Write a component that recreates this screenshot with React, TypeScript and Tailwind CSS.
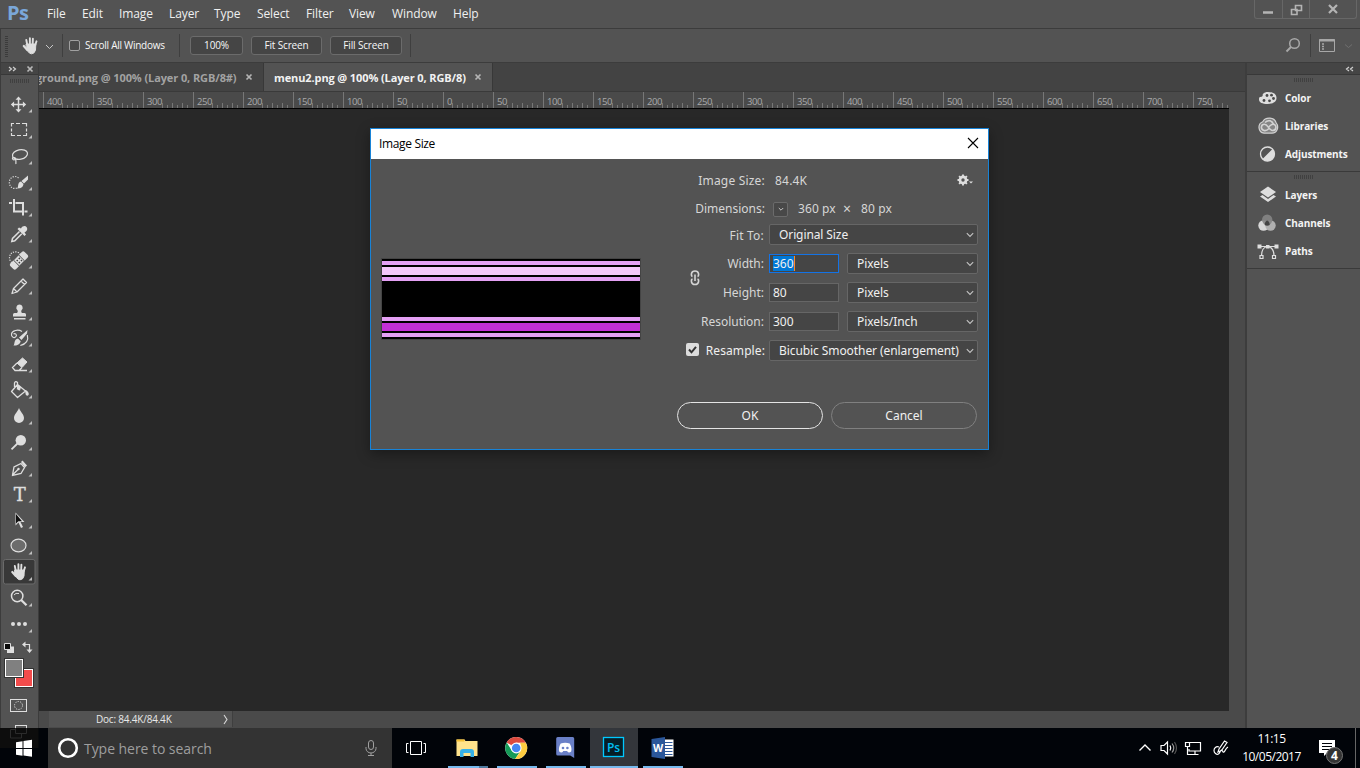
import type { ReactNode } from "react";

const UI = "font-['Open_Sans','Noto_Sans',sans-serif]";

function HandShape() {
  return (
    <g stroke="#dedede" strokeLinecap="round" fill="none">
      <path d="M15.700 11.500 L14.800 7 M18.400 10.500 V5.200 M21.200 10.500 L21.400 5.600 M23.800 12 L25 8.300" strokeWidth="1.900" />
      <path d="M15.800 17 L12.300 13" strokeWidth="2.200" />
      <path d="M15 11 H24.300 L24 17 Q23 20.800 20 20.800 Q18 20.800 16.500 18.500 L14.800 16 Z" fill="#dedede" strokeWidth="1" />
    </g>
  );
}

const L = "#dedede";

const tools: { name: string; art: ReactNode }[] = [
  {
    name: "move",
    art: (
      <>
        <path d="M18.500 7V20M12 13.500H25" stroke={L} strokeWidth="1.500" fill="none" />
        <path d="M18.500 5.500l3 3.300h-6zM18.500 21.500l3-3.300h-6zM10.800 13.500l3.300-3v6zM26.200 13.500l-3.300-3v6z" fill={L} />
      </>
    ),
  },
  { name: "marquee", art: <path d="M11.500 9.500V6.500H14M16 6.500h4M22 6.500h4.500V9.500M26.500 11.500v3M26.500 16v2.500H23M21 18.500h-4M15 18.500h-3.500V16M11.500 14.500V11.500" fill="none" stroke={L} strokeWidth="1.200" /> },
  {
    name: "lasso",
    art: (
      <g fill="none" stroke={L} strokeWidth="1.200">
        <ellipse cx="20" cy="11.500" rx="7.600" ry="4.800" transform="rotate(-12 20 11.500)" />
        <path d="M13 14c-1.500 2 .5 3.500 2 2.500s-.5-2.500-1.500-1.500M15.500 16.500c1 1.500 0 2.500.5 4.500" />
      </g>
    ),
  },
  {
    name: "quick-select",
    art: (
      <>
        <path d="M18.500 9A5.500 6 0 1 0 17 19" fill="none" stroke={L} strokeWidth="1.200" strokeDasharray="1.200 1.300" />
        <path d="M28 6.500v4l-4 4-2.500-2.500zM21 12.500l2.500 2.500c-.5 4-4 4.500-6.500 4.500 2-1.500 0-6 4-7z" fill={L} />
      </>
    ),
  },
  { name: "crop", art: <path d="M14 4v12.500h8.500M9 8h3M15.500 8h7.500v12.500M24.500 16.500h3" fill="none" stroke={L} strokeWidth="2" /> },
  {
    name: "eyedropper",
    art: (
      <>
        <path d="M19.500 10.500l-7 7-.7 3 3-.7 7-7" fill="none" stroke={L} strokeWidth="1.500" />
        <path d="M17.500 8l7 7 1.500-1.500-1.500-2c3.500-2 3-4 2-5.500s-4-1.500-5.500 1.500l-2-1z" fill={L} />
      </>
    ),
  },
  {
    name: "healing",
    art: (
      <>
        <path d="M20.500 7.500a6 6 0 1 0-8 8.500" fill="none" stroke={L} strokeWidth="1.200" strokeDasharray="1.200 1.200" />
        <g transform="rotate(-45 19 13.500)">
          <rect x="9" y="9.500" width="20" height="8" rx="2" fill={L} />
          <rect x="15" y="9.500" width="8" height="8" fill="#535353" />
          <rect x="15.800" y="9.800" width="6.400" height="7.400" fill={L} />
          <path d="M17 11.500h1.500v1.500H17zM20 11.500h1.500v1.500H20zM17 14.500h1.500V16H17zM20 14.500h1.500V16H20z" fill="#444" />
        </g>
      </>
    ),
  },
  { name: "pencil", art: <path d="M12 20.500l1.500-5 9.500-9.500 3.500 3.500-9.500 9.500zM13.500 15.500l3.500 3.500M21 8l3.500 3.500" fill="none" stroke={L} strokeWidth="1.300" strokeLinejoin="round" /> },
  { name: "stamp", art: <path d="M19.500 5.500a3.200 3.200 0 0 0-2 5.700c.6 1.300 0 2.300-.5 2.800h-2.500q-1.500 0-1.500 1.500v2h13v-2q0-1.500-1.500-1.500H22c-.5-.5-1.100-1.500-.5-2.800a3.200 3.200 0 0 0-2-5.700zM14 19h11.500v1.500H14z" fill={L} /> },
  {
    name: "history",
    art: (
      <>
        <path d="M22 6.500c-4-2.500-10-1-10.500 2.500s3 4.500 4.500 2.500-1-3.500-2.500-2.500M27.300 10c1.500 5-1 9-7 10.500" fill="none" stroke={L} strokeWidth="1.200" />
        <path d="M27.500 5l-.5 3.500-5.500 6.500-2.500-2.500zM18 13.500l2.700 2.700c-1 3.800-4 4.300-7.200 4.300 1.700-2 0-6 4.500-7z" fill={L} />
      </>
    ),
  },
  {
    name: "eraser",
    art: (
      <>
        <path d="M22.500 7l4.500 4-5 5.500-5-4.500z" fill={L} stroke={L} />
        <path d="M17 12l-4.500 4.500 2.500 3h4l3-3M15 19.500h12" fill="none" stroke={L} strokeWidth="1.300" />
      </>
    ),
  },
  {
    name: "bucket",
    art: (
      <>
        <path d="M17.500 7.500l8 6.500-8 6.500-6-6zM14.500 10V6q1-2.500 3-.5v7" fill="none" stroke={L} strokeWidth="1.300" strokeLinejoin="round" />
        <path d="M17 7l4 3-1 3.500-2-.5zM25 13c3 .5 4.500 3.500 3.500 5s-3 .5-3-1.500z" fill={L} />
      </>
    ),
  },
  { name: "blur", art: <path d="M19 5c1.500 4 5 6.500 5 10a5 5 0 0 1-10 0c0-3.500 3.500-6 5-10z" fill={L} /> },
  {
    name: "dodge",
    art: (
      <>
        <circle cx="20.800" cy="11.300" r="5.200" fill={L} />
        <path d="M17.500 14.500l-6 5.800" stroke={L} strokeWidth="1.800" />
      </>
    ),
  },
  {
    name: "pen",
    art: (
      <>
        <path d="M12.500 20l1.500-8 7-3.500 3.500 4-3.500 6-8.500 2zM12.500 20l6-6" fill="none" stroke={L} strokeWidth="1.300" />
        <circle cx="18.500" cy="14" r="1.200" fill={L} />
        <path d="M21 7l1.500-1.500 4.500 5-2 2z" fill={L} />
      </>
    ),
  },
  { name: "type", art: <text x="19.800" y="19.500" textAnchor="middle" fill={L} stroke={L} strokeWidth=".4" fontSize="18" fontFamily="DejaVu Serif, serif">T</text> },
  {
    name: "select",
    art: (
      <>
        <path d="M15.500 5.500v13l3-3 2.500 5.500 2-1-2.500-5h4z" fill={L} />
        <path d="M16 7v9.500l2.300-2.200h3.700z" fill="#111" />
      </>
    ),
  },
  { name: "ellipse", art: <ellipse cx="18.500" cy="12.500" rx="7.500" ry="6.300" fill="#6c6c6c" stroke={L} strokeWidth="1.200" /> },
  { name: "hand", art: <HandShape /> },
  {
    name: "zoom",
    art: (
      <>
        <circle cx="17.200" cy="11" r="5.700" fill="none" stroke={L} strokeWidth="1.500" />
        <path d="M14 10q1.500-2.500 5-1.500" fill="none" stroke={L} />
        <path d="M21.200 15l5.300 5.300" stroke={L} strokeWidth="2.300" />
      </>
    ),
  },
  {
    name: "more",
    art: (
      <g fill={L}>
        <circle cx="13" cy="13" r="2" />
        <circle cx="19" cy="13" r="2" />
        <circle cx="25" cy="13" r="2" />
      </g>
    ),
  },
];

const menus = [
  ["File", "w-[35px]"],
  ["Edit", "w-[37px]"],
  ["Image", "w-[50px]"],
  ["Layer", "w-[45px]"],
  ["Type", "w-[43px]"],
  ["Select", "w-[49px]"],
  ["Filter", "w-[43px]"],
  ["View", "w-[43px]"],
  ["Window", "w-[61px]"],
  ["Help", "w-[40px]"],
];

function MenuBar() {
  return (
    <header className="flex h-[28px] shrink-0 items-start">
      <div className="w-[47px] pl-[7px] font-['Open_Sans'] text-[20px] leading-[26px] font-bold tracking-[-0.5px] text-[#7aa7d9]">Ps</div>
      <nav className="flex flex-1 text-[12px] leading-[28px] tracking-[-0.1px] text-[#f0f0f0]">
        {menus.map(([m, w]) => (
          <span key={m} className={`${w} shrink-0 whitespace-nowrap`}>{m}</span>
        ))}
      </nav>
      <div className="mr-[3px] flex h-[19px] w-[103px] rounded-b-[3px] border border-t-0 border-[#676767]">
        <svg width="101" height="18" viewBox="0 0 101 18" fill="none">
          <path d="M27.500 0V18M54.500 0V18" stroke="#676767" />
          <path d="M8 12.500h10" stroke="#b4b4b4" strokeWidth="2.500" />
          <path d="M40.500 5.500h6v5h-6zM36.500 9.500h5.500v5h-5.500z" stroke="#b4b4b4" strokeWidth="1.600" />
          <path d="M74 5l8 8M82 5l-8 8" stroke="#b4b4b4" strokeWidth="2.200" />
        </svg>
      </div>
    </header>
  );
}

function FlatButton({ children, className }: { children: ReactNode; className: string }) {
  return (
    <button className={`h-[19px] rounded-[3px] border border-[#6b6b6b] bg-[#454545] text-center text-[10px] leading-[17px] tracking-[-0.15px] whitespace-nowrap text-[#f8f8f8] ${className}`}>{children}</button>
  );
}

function OptionsBar() {
  return (
    <div className="flex h-[35px] shrink-0 items-center border-t border-b border-[#3c3c3c] border-l border-l-[#3c3c3c]">
      <svg width="61" height="33" viewBox="1 0 61 33" fill="none">
        <path d="M6.500 7V28" stroke="#3b3b3b" strokeWidth="3" strokeDasharray="1 1" />
        <g transform="translate(11.500 4)"><HandShape /></g>
        <path d="M46 16l3.500 3.500L53 16" stroke="#c8c8c8" />
      </svg>
      <div className="h-[23px] w-px bg-[#3f3f3f]" />
      <div className="ml-[6px] h-[11px] w-[11px] rounded-[2px] border border-[#a0a0a0] bg-[#4a4a4a]" />
      <div className="ml-[5px] w-[94px] text-[10px] tracking-[-0.27px] whitespace-nowrap text-[#f8f8f8]">Scroll All Windows</div>
      <div className="h-[23px] w-px bg-[#3f3f3f]" />
      <FlatButton className="ml-[10px] w-[53px]">100%</FlatButton>
      <FlatButton className="ml-[8px] w-[71px]">Fit Screen</FlatButton>
      <FlatButton className="ml-[8px] w-[72px]">Fill Screen</FlatButton>
      <div className="ml-[8px] h-[23px] w-px bg-[#3f3f3f]" />
      <svg className="ml-auto" width="78" height="33" viewBox="1282 29 78 33" fill="none">
        <circle cx="1294.500" cy="43.500" r="4.800" stroke="#a8a8a8" strokeWidth="1.500" />
        <path d="M1291 47l-4.500 4.500" stroke="#a8a8a8" strokeWidth="2" />
        <path d="M1310.500 34v23" stroke="#3f3f3f" />
        <path d="M1319.500 39.500h15v12h-15z" stroke="#a8a8a8" />
        <path d="M1319 40.500h16" stroke="#a8a8a8" strokeWidth="2" />
        <path d="M1322 44h2M1322 46.500h2M1322 49h2" stroke="#a8a8a8" strokeWidth="1.300" />
        <path d="M1345 44.500l3.500 3 3.500-3" stroke="#707070" />
      </svg>
    </div>
  );
}

function Grip() {
  return (
    <svg width="19" height="4" viewBox="0 0 19 4" className="block">
      <path d="M0 2H19" stroke="#404040" strokeWidth="4" strokeDasharray="1 1" />
    </svg>
  );
}

function Toolbar() {
  return (
    <aside className="relative z-10 flex w-[39px] shrink-0 flex-col border-r border-l border-[#3c3c3c] bg-[#535353]">
      <div className="h-[12px] shrink-0 border-b border-[#383838] bg-[#454545]">
        <svg width="37" height="11" viewBox="1 0 37 11" fill="none">
          <path d="M9 4l2.500 2L9 8M13 4l2.500 2L13 8" stroke="#d0d0d0" strokeWidth="1.200" />
          <path d="M27.500 3.500l5 5M32.500 3.500l-5 5" stroke="#b8b8b8" strokeWidth="1.700" />
        </svg>
      </div>
      <div className="flex h-[16px] shrink-0 justify-center pt-[4px]"><Grip /></div>
      {tools.map((t) => (
        <svg key={t.name} width="37" height="26" viewBox="1 0 37 26" className="block shrink-0">
          {t.name === "hand" && <rect x="3.500" y=".5" width="31.500" height="24.500" rx="2" fill="#383838" stroke="#6a6a6a" />}
          {t.art}
          <path d="M32 18v3.500h-3.500z" fill="#c0c0c0" />
        </svg>
      ))}
      <svg width="37" height="91" viewBox="1 637 37 91" fill="none" className="block shrink-0">
        <path d="M7 646.500h7v6.500H7z" fill={L} />
        <path d="M4.500 643.500h6v6h-6z" fill="#0a0a0a" stroke={L} />
        <path d="M24 644.500h5.500v6" stroke={L} strokeWidth="1.200" />
        <path d="M22 644.500l3.500-3v6zM29.500 653l-3-3.500h6z" fill={L} />
        <rect x="14.500" y="668.500" width="19" height="19" fill="#f24c4c" stroke="#333" />
        <rect x="15.500" y="669.500" width="17" height="17" fill="#f24c4c" stroke="#fff" />
        <rect x="4.500" y="658.500" width="19" height="19" stroke="#333" />
        <rect x="5.500" y="659.500" width="17" height="17" fill="#808080" stroke="#fff" />
        <rect x="10.500" y="699.500" width="16" height="12" stroke={L} />
        <circle cx="18.500" cy="705.500" r="4" stroke={L} strokeDasharray="1.200 1.300" />
        <rect x="15.500" y="725.500" width="11" height="8" stroke={L} />
      </svg>
    </aside>
  );
}

const rulerLabels = [400, 350, 300, 250, 200, 150, 100, 50, 0, 50, 100, 150, 200, 250, 300, 350, 400, 450, 500, 550, 600, 650, 700, 750];

function Ruler() {
  return (
    <div className="flex h-[17px] w-[1190px] overflow-hidden border-b border-black bg-[#4a4a4a] pl-[4px]">
      {rulerLabels.map((n, i) => {
        const first = n >= 100 ? 20 : n > 0 ? 15 : 10;
        return (
          <div key={i} className="flex h-[16px] w-[50px] shrink-0 border-l border-[#777] pt-[4px]">
            <span className="w-[20px] pl-[3px] text-[9.5px] leading-[11px] tracking-[-0.4px] text-[#a9a9a9]">{n}</span>
            <svg width="50" height="12" viewBox="1 0 50 12" className="-ml-[20px] shrink-0">
              {[10, 15, 20, 25, 30, 35, 40, 45].filter((x) => x >= first).map((x) => (
                <path key={x} d={`M${x + 0.5} ${x % 10 ? 9 : 7}V12`} stroke="#777" />
              ))}
            </svg>
          </div>
        );
      })}
    </div>
  );
}

function DocTabs() {
  return (
    <div className="flex h-[29px] shrink-0 border-b border-[#3a3a3a] bg-[#434343] text-[11px] leading-[29px] font-bold whitespace-nowrap">
      <div className="flex w-[225px] items-center border-r border-[#383838] text-[#a2a2a2]">
        <span className="-ml-[3px] w-[209px] tracking-[-0.1px]">ground.png @ 100% (Layer 0, RGB/8#)</span>
        <TabClose />
      </div>
      <div className="flex w-[229px] items-center border-r border-[#383838] bg-[#535353] pl-[10px] text-[#f2f2f2]">
        <span className="w-[200px] tracking-[-0.11px]">menu2.png @ 100% (Layer 0, RGB/8)</span>
        <TabClose />
      </div>
    </div>
  );
}

function TabClose() {
  return (
    <svg width="8" height="8" viewBox="0 0 8 8"><path d="M1.500 1.500l5 5M6.500 1.500l-5 5" stroke="#b4b4b4" strokeWidth="1.700" /></svg>
  );
}

function Document() {
  return (
    <main className="flex min-w-0 flex-1 flex-col">
      <DocTabs />
      <div className="flex flex-1">
        <div className="flex w-[1190px] flex-col bg-[#282828]"><Ruler /></div>
        <div className="flex-1 bg-[#4a4a4a]" />
      </div>
      <div className="flex h-[17px] shrink-0 bg-[#4a4a4a] pl-[10px] pb-px">
        <div className="flex w-[184px] items-center border-r border-[#3f3f3f] bg-[#535353] pl-[47px] text-[10px] text-[#e8e8e8]">
          <span className="w-[126px] tracking-[-0.2px] whitespace-nowrap">Doc: 84.4K/84.4K</span>
          <svg width="8" height="11" viewBox="0 0 8 11"><path d="M2 1l3 4.500L2 10" fill="none" stroke="#d8d8d8" strokeWidth="1.100" /></svg>
        </div>
      </div>
    </main>
  );
}

const panelGroups: { label: string; icon: ReactNode }[][] = [
  [
    {
      label: "Color",
      icon: (
        <>
          <path d="M10 4c5 0 8.500 2 8.500 6s-4 6-9 6C4.500 16 1 14.500 1 11.500S2.500 9 4 8.500 4 7.500 5 6 8 4 10 4z" fill={L} />
          <g fill="#484848"><circle cx="9" cy="7.500" r="1.400" /><circle cx="13.500" cy="7.200" r="1.400" /><circle cx="15.500" cy="10.500" r="1.400" /><circle cx="11.500" cy="12.800" r="1.400" /><circle cx="6" cy="12.500" r="1.400" /></g>
        </>
      ),
    },
    {
      label: "Libraries",
      icon: (
        <g fill="none" stroke="#d2d2d2">
          <path d="M6 17.200a6 6 0 0 1-1.200-11.500C7 1 16 .5 18 6.500c3.500 4.500 1 10.700-4 10.700z" fill="#858585" strokeWidth="1.200" />
          <path d="M11 12.500C9 14.500 7.500 15 6 14.500 2 13 3 8.300 6.500 8.300c3.500 0 4.500 6.200 8 6.200 4.500 0 4.500-6.200.5-6.200-2 0-3 1.500-4 2.500M7 6.500c3-3 7-2 8.500 1.500" strokeWidth="1.600" />
        </g>
      ),
    },
    {
      label: "Adjustments",
      icon: (
        <>
          <circle cx="9.500" cy="10" r="7" fill="none" stroke={L} strokeWidth="1.300" />
          <path d="M14.500 5A7 7 0 0 1 4.500 15z" fill={L} />
        </>
      ),
    },
  ],
  [
    {
      label: "Layers",
      icon: (
        <>
          <path d="M10 1.500l8 5.500-8 5.500L2 7z" fill={L} />
          <path d="M2 11.500l2.500-1.500 5.500 4 5.500-4 2.500 1.500-8 5.500z" fill={L} />
        </>
      ),
    },
    {
      label: "Channels",
      icon: (
        <>
          <circle cx="5.500" cy="12.500" r="5.200" fill="#d8d8d8" />
          <circle cx="12.500" cy="12.500" r="5.200" fill="#b0b0b0" />
          <circle cx="9.200" cy="6.700" r="5.200" fill="#858585" fillOpacity=".9" />
          <path d="M9.200 7.500c2 1 2.500 2.500 2.500 4.500-1.500 1-3.500 1-5 0 0-2 .5-3.500 2.500-4.500z" fill="#444" />
        </>
      ),
    },
    {
      label: "Paths",
      icon: (
        <g fill="none" stroke={L} strokeWidth="1.200">
          <path d="M1 5.500h18M3.500 15C3.500 9 6 6 9.500 5.500 13.500 6 16 9 16 15" />
          <path d="M-.5 3.500h4v4h-4zM8 4h3.500v3.500H8zM16.500 3.500h4v4h-4z" fill={L} stroke="none" />
          <path d="M2 14.500h3v3H2zM14.500 14.500h3v3h-3z" />
        </g>
      ),
    },
  ],
];

function RightPanels() {
  return (
    <aside className="flex w-[115px] shrink-0 flex-col border-l-2 border-[#3d3d3d] bg-[#535353]">
      <div className="flex h-[12px] shrink-0 justify-end border-b border-[#383838] bg-[#454545] pr-[6px]">
        <svg width="9" height="11" viewBox="0 0 9 11"><path d="M4 4L1.500 6 4 8M8 4L5.500 6 8 8" fill="none" stroke="#d0d0d0" strokeWidth="1.200" /></svg>
      </div>
      {panelGroups.map((g, i) => (
        <section key={i} className="h-[97px] border-b border-[#3a3a3a] pt-[3px]">
          <div className="ml-[47px] h-[6px]"><Grip /></div>
          {g.map((p) => (
            <div key={p.label} className="flex h-[28px] items-center">
              <svg width="23" height="20" viewBox="-1 0 23 20" className="ml-[10px]">{p.icon}</svg>
              <span className="ml-[5px] text-[10px] leading-[16px] font-bold tracking-[-0.1px] text-[#f4f4f4]">{p.label}</span>
            </div>
          ))}
        </section>
      ))}
    </aside>
  );
}

function Chevron() {
  return <svg width="8" height="6" viewBox="0 0 8 6" className="shrink-0"><path d="M.8 1.200L4 4.400l3.200-3.200" fill="none" stroke="#c4c4c4" strokeWidth="1.100" /></svg>;
}

function Picker({ children, className }: { children: ReactNode; className: string }) {
  return (
    <div className={`flex h-[21px] items-center justify-between rounded-[2px] border border-[#666] bg-[#454545] pr-[3px] pl-[9px] leading-[19px] whitespace-nowrap text-[#f0f0f0] ${className}`}>
      <span>{children}</span>
      <Chevron />
    </div>
  );
}

function FieldRow({ label, value, unit, active }: { label: string; value: string; unit: string; active?: boolean }) {
  return (
    <div className="flex h-[29px]">
      <div className="w-[92px] pr-[5px] text-right leading-[21px]">{label}</div>
      <div className={`mt-px flex h-[19px] w-[70px] items-center border bg-[#454545] pl-[3px] text-[#f0f0f0] ${active ? "border-[#1473e6]" : "border-[#666]"}`}>
        <span className={active ? "border-r border-[#ff8a2a] bg-[#0078d7] leading-[15px]" : "leading-[17px]"}>{value}</span>
      </div>
      <Picker className="ml-[8px] w-[131px] tracking-[-0.05px]">{unit}</Picker>
    </div>
  );
}

const stripes = [
  "h-[2px] bg-black", "h-[4px] bg-[#e4a0f4]", "h-[2px] bg-black", "h-[8px] bg-[#f4c8fa]", "h-[2px] bg-black", "h-[4px] bg-[#e4a0f4]",
  "h-[36px] bg-black", "h-[4px] bg-[#e4a0f4]", "h-[2px] bg-black", "h-[8px] bg-[#c32fd6]", "h-[2px] bg-black", "h-[4px] bg-[#e4a0f4]", "h-[2px] bg-black",
];

function ImageSizeDialog() {
  return (
    <div className="absolute top-[128px] left-[370px] z-20 flex h-[322px] w-[619px] flex-col border border-[#1883d7] bg-[#535353] shadow-[0_4px_12px_rgba(0,0,0,0.35)]">
      <div className="flex h-[30px] items-center justify-between bg-white pr-[9px] pl-[8px] text-[12px] text-black">
        <span className="tracking-[-0.35px]">Image Size</span>
        <svg width="12" height="12" viewBox="0 0 12 12" className="-mt-[2px]"><path d="M1 1l10 10M11 1L1 11" stroke="#000" strokeWidth="1.100" /></svg>
      </div>
      <div className="flex font-['Noto_Sans',sans-serif] text-[12px] text-[#d6d6d6]">
        <div className="mt-[99px] ml-[10px] h-[82px] w-[260px] border border-[#444]">
          {stripes.map((s, i) => <div key={i} className={s} />)}
        </div>
        <div className="ml-[36px] w-[301px] pt-[8px]">
          <div className="flex h-[28px] items-center">
            <div className="w-[92px] pr-[4px] text-right tracking-[0.2px]">Image Size:</div>
            <span className="ml-[6px] tracking-[0.2px]">84.4K</span>
            <svg width="18" height="14" viewBox="0 0 18 14" className="mt-[-2px] mr-[4px] ml-auto">
              <circle cx="7" cy="7" r="3.200" fill="none" stroke={L} strokeWidth="2.400" />
              <path d="M7 1.500v11M1.500 7h11M3.100 3.100l7.800 7.800M10.900 3.100l-7.800 7.800" stroke={L} strokeWidth="1.900" />
              <circle cx="7" cy="7" r="1.700" fill="#535353" />
              <path d="M13 8.500h4l-2 2z" fill={L} />
            </svg>
          </div>
          <div className="flex h-[29px] items-center pb-px">
            <div className="w-[92px] pr-[4px] text-right">Dimensions:</div>
            <div className="ml-[4px] flex h-[15px] w-[15px] items-center justify-center rounded-[2px] border border-[#6b6b6b] bg-[#484848]">
              <svg width="6" height="5" viewBox="0 0 6 5"><path d="M.8 1L3 3.200 5.200 1" fill="none" stroke="#c4c4c4" /></svg>
            </div>
            <span className="ml-[10px] w-[45px] tracking-[0.1px]">360 px</span>
            <span className="w-[18px] text-[14px] leading-[16px]">×</span>
            <span className="tracking-[0.1px]">80 px</span>
          </div>
          <div className="flex h-[29px]">
            <div className="w-[92px] pr-[5px] text-right leading-[23px] tracking-[0.2px]">Fit To:</div>
            <Picker className="w-[209px] tracking-[-0.1px]">Original Size</Picker>
          </div>
          <div className="relative">
            <FieldRow label="Width:" value="360" unit="Pixels" active />
            <FieldRow label="Height:" value="80" unit="Pixels" />
            <svg width="10" height="16" viewBox="0 0 10 16" className="absolute top-[17px] left-[13px]" fill="none" stroke="#d4d4d4" strokeWidth="1.600">
              <path d="M2.500 6.500Q1 6 1.500 3.500 2 1 5 1t3.500 2.500Q9 6 7.500 6.500M2.500 9Q1 9.500 1.500 12q.5 2.500 3.500 2.500t3.500-2.500Q9 9.500 7.500 9M5 4.500v6.500" />
            </svg>
          </div>
          <FieldRow label="Resolution:" value="300" unit="Pixels/Inch" />
          <div className="flex h-[62px] text-[#f0f0f0]">
            <svg width="13" height="13" viewBox="0 0 13 13" className="mt-[3px] ml-[9px]">
              <rect width="13" height="13" rx="2" fill="#dcdcdc" />
              <path d="M3 6.500l2.500 2.800L10 3.800" fill="none" stroke="#333" strokeWidth="2" />
            </svg>
            <div className="w-[70px] pr-[4px] text-right leading-[21px] tracking-[0.1px]">Resample:</div>
            <Picker className="w-[209px] tracking-[-0.08px]">Bicubic Smoother (enlargement)</Picker>
          </div>
          <div className="flex gap-[8px] text-[#f0f0f0]">
            <button className="h-[27px] w-[146px] rounded-full border border-[#e4e4e4]">OK</button>
            <button className="h-[27px] w-[146px] rounded-full border border-[#808080]">Cancel</button>
          </div>
        </div>
      </div>
    </div>
  );
}

function TaskCell({ children, active }: { children: ReactNode; active?: boolean }) {
  return (
    <div className={`flex h-[40px] flex-col items-center justify-between ${active ? "w-[48px] bg-[#33363b]" : "w-[49px]"}`}>
      <svg width="26" height="38" viewBox="-13 -20 26 38">{children}</svg>
      <div className={active ? "h-[2px] w-[48px] bg-[#76b9ed]" : "h-[2px] w-[40px] bg-[#76b9ed]"} />
    </div>
  );
}

function Taskbar() {
  return (
    <footer className="flex h-[40px] shrink-0 bg-[#010409] text-white">
      <div className="w-[48px]">
        <svg width="48" height="40" viewBox="0 728 48 40">
          <path d="M0 728h38.500v20H0z" fill="#0d0d0d" />
          <path d="M15.500 728v5.500h11V728M15 729.500h-4.500v8.500h11v-4" fill="none" stroke="#2b2b2b" />
          <path d="M16 742.200l6.500-1v6.800H16zM23.500 741l8.500-1.200v8.200h-8.500zM16 749h6.500v6.800l-6.500-1zM23.500 749H32v7.700l-8.500-1.100z" fill="#fff" />
        </svg>
      </div>
      <div className="flex w-[344px] items-center bg-[#333]">
        <svg width="22" height="22" viewBox="0 0 22 22" className="ml-[9px]"><circle cx="11" cy="11" r="8.800" fill="none" stroke="#fff" strokeWidth="2.600" /></svg>
        <span className="ml-[5px] text-[14px] tracking-[-0.05px] text-[#9e9e9e]">Type here to search</span>
        <svg width="14" height="18" viewBox="0 0 14 18" className="mr-[14px] ml-auto" fill="none" stroke="#a0a0a0">
          <rect x="4.500" y="1.500" width="5" height="9" rx="2.500" />
          <path d="M2 8v1.500a5 4.500 0 0 0 10 0V8M7 14v2.500M4 16.500h6" />
        </svg>
      </div>
      <div className="flex w-[51px] items-center pl-[13px]">
        <svg width="22" height="16" viewBox="0 0 22 16" fill="none" stroke="#fff">
          <path d="M5.500 1.500h11v13h-11zM3.500 3.500h-2v9h2M18.500 3.500h2v9h-2" />
        </svg>
      </div>
      <div className="flex h-[40px] w-[49px] flex-col items-center justify-between">
        <svg width="26" height="38" viewBox="-13 -20 26 38">
          <path d="M-11.500-8.500h8l1 1.500h12V8h-21z" fill="#ffe38c" />
          <path d="M-11.500-8.500h8V-6.500h-8z" fill="#f4bf33" />
          <path d="M-8 9V4q0-3 3-3h8q3 0 3 3v5H2.500V5h-7v4z" fill="#36b1e8" />
        </svg>
        <div className="flex w-[40px]"><div className="h-[2px] w-[31px] bg-[#76b9ed]" /><div className="h-[2px] w-[9px] bg-[#4f7ba0]" /></div>
      </div>
      <TaskCell>
        <circle cx="-.8" r="11" fill="#fff" />
        <g transform="translate(-.8 0)">
          <path d="M0 0L-9.500-5.500A11 11 0 0 1 9.600-5.300H0z" fill="#dd4a3e" />
          <path d="M-9.500-5.500A11 11 0 0 0-1 11L4.500 2.500 0 5-4.500 2.500z" fill="#159b58" />
          <path d="M9.600-5.300A11 11 0 0 1-1 11L4.800 2.500 4-5.300z" fill="#ffcd40" />
          <circle r="5.400" fill="#fff" />
          <circle r="4.300" fill="#4587f3" />
        </g>
      </TaskCell>
      <TaskCell>
        <g transform="translate(-.8 0)">
          <path d="M-9-9.500Q-9-11-7.500-11H7.500Q9-11 9-9.500V10L5 7.500H-7.500Q-9 7.500-9 6z" fill="#6a80c7" />
          <path d="M-4.500-4.500Q0-6 4.500-4.500 7 0 6 3.500 4 5 2.500 4L2 3h-4l-.5 1Q-4 5-6 3.500-7 0-4.500-4.500z" fill="#fff" />
          <circle cx="-2.200" cy="0" r="1.300" fill="#6a80c7" /><circle cx="2.200" cy="0" r="1.300" fill="#6a80c7" />
        </g>
      </TaskCell>
      <TaskCell active>
        <rect x="-10.500" y="-10.500" width="20" height="19" fill="#061e26" stroke="#00c8ff" strokeWidth="1.300" />
        <text x="-.5" y="4" textAnchor="middle" fontSize="12" fontWeight="600" fontFamily="Open Sans, sans-serif" fill="#00c0f3">Ps</text>
      </TaskCell>
      <TaskCell>
        <path d="M1-8.500h9.500v17H1z" fill="#fff" />
        <path d="M2-5.500h7.500M2-2.500h7.500M2 .5h7.500M2 3.500h7.500M2 6.500h7.500" stroke="#2b579a" />
        <path d="M-11.500-9L2-11v22L-11.500 9z" fill="#2b579a" />
        <text x="-5" y="4" textAnchor="middle" fontSize="10.500" fontWeight="700" fontFamily="Open Sans, sans-serif" fill="#fff">W</text>
      </TaskCell>
      <svg className="ml-auto" width="100" height="40" viewBox="1135 728 100 40" fill="none" stroke="#fff" strokeWidth="1.200">
        <path d="M1139.500 750.500l5.500-5.500 5.500 5.500" strokeWidth="1.400" />
        <path d="M1161 745.500h3l3.500-3.500v12l-3.500-3.500h-3z" />
        <path d="M1170 745.500q1.500 2.500 0 5" /><path d="M1172 743.500q3.500 4.500 0 9" stroke="#999" /><path d="M1174.500 742q4 6 0 12" stroke="#555" />
        <path d="M1190 742.500h10.500v8.500h-11.500v-2M1195 751v3.500M1190.500 754.500h8M1185.500 742.500h4v4h-4zM1187.500 746.500v8h3" />
        <path d="M1218 752l1-3 5.500-8 2.500 1.500-5.500 8zM1219 747c-3-1-5 1-5 3.500s2.500 4.500 4.500 3.500 1.500-4 3-4 1 3 2.500 2 1-3.500 4-5" />
      </svg>
      <div className="w-[74px] pr-px text-center text-[12px] leading-[19px] tracking-[-0.5px] whitespace-nowrap">
        <div className="h-[18px] pt-px">11:15</div>
        <div className="pt-px">10/05/2017</div>
      </div>
      <svg width="51" height="40" viewBox="1309 728 51 40">
        <path d="M1319 740h16v13h-8l-3 3v-3h-5z" fill="#fff" />
        <path d="M1322 743.500h10M1322 746.500h10M1322 749.500h10" stroke="#010409" />
        <circle cx="1334.500" cy="755.500" r="8" fill="#343434" stroke="#777" />
        <text x="1334.500" y="759.700" textAnchor="middle" fontSize="12" fontWeight="700" fontFamily="Open Sans, sans-serif" fill="#fff">4</text>
        <path d="M1355.500 728v40" stroke="#666" />
      </svg>
    </footer>
  );
}

export default function App() {
  return (
    <div className={`relative flex h-[768px] w-[1360px] flex-col overflow-hidden bg-[#535353] ${UI}`}>
      <MenuBar />
      <OptionsBar />
      <div className="flex h-[665px] shrink-0">
        <Toolbar />
        <Document />
        <RightPanels />
      </div>
      <Taskbar />
      <ImageSizeDialog />
    </div>
  );
}
